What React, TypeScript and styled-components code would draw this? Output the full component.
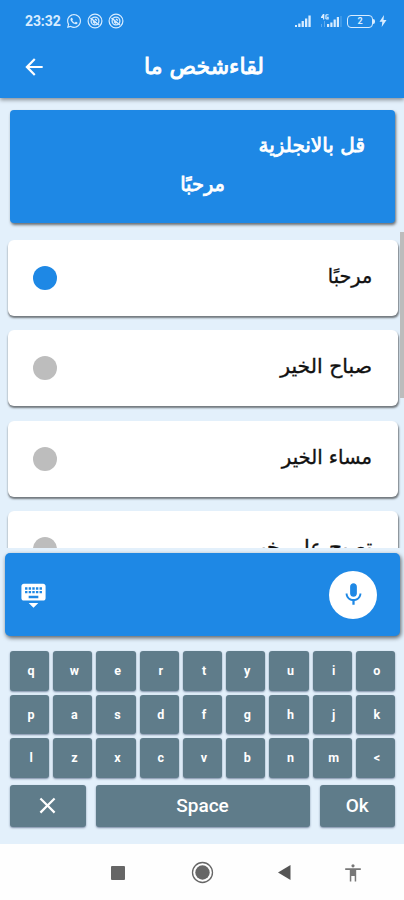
import React from 'react';
import styled, { createGlobalStyle } from 'styled-components';
import { MdArrowBack, MdKeyboardHide, MdMic, MdClose } from 'react-icons/md';
import { FaWhatsapp } from 'react-icons/fa';

const BLUE = '#1e88e5';
const SLATE = '#5f7c8a';

const GlobalStyle = createGlobalStyle`
  * { box-sizing: border-box; }
  body { margin: 0; background: #e3f2fd; }
`;

const Screen = styled.main`
  display: flex;
  flex-direction: column;
  width: 404px;
  height: 900px;
  overflow: hidden;
  background: #e3f0fb;
  font-family: Roboto, 'DejaVu Sans', sans-serif;
`;

const Header = styled.header`
  flex: none;
  height: 98px;
  background: ${BLUE};
  color: #fff;
  box-shadow: 0 2px 4px rgba(0, 0, 0, 0.4);
`;

const StatusBar = styled.div`
  display: flex;
  align-items: center;
  height: 42px;
  padding: 0 17px 0 25px;
  color: #d8ecff;
`;

const Clock = styled.span`
  width: 35px;
  margin-right: 6px;
  font-size: 14px;
  font-weight: 700;
  letter-spacing: -0.1px;
`;

const StatusIcons = styled.div`
  display: flex;
  align-items: center;
  gap: 5px;
`;

const StatusRight = styled.div`
  display: flex;
  align-items: center;
  margin-left: auto;
`;

const TitleBar = styled.div`
  display: grid;
  grid-template-columns: 46px 1fr;
  align-items: center;
  height: 49px;
  padding: 0 0 0 21px;
  svg { display: block; }
`;

const Arabic = styled.span<{ $size: number; $stroke?: number; $scale?: number }>`
  display: block;
  direction: rtl;
  white-space: nowrap;
  font-family: 'DejaVu Sans', sans-serif;
  font-size: ${p => p.$size}px;
  font-weight: 400;
  line-height: 28px;
  -webkit-text-stroke: ${p => p.$stroke ?? 0}px currentColor;
  transform: scaleX(${p => p.$scale ?? 1});
  transform-origin: right center;
`;

const Title = styled.h1`
  margin: 0;
  padding-right: 140px;
`;

const Prompt = styled.section`
  flex: none;
  height: 113px;
  margin: 12px 9px 0 10px;
  padding: 21px 30px 0 0;
  border-radius: 4px;
  background: ${BLUE};
  color: #fff;
  box-shadow: 1px 2px 3px rgba(0, 0, 0, 0.55);
`;

const PromptWord = styled.div`
  padding: 11px 140px 0 0;
`;

const ListArea = styled.div`
  flex: none;
  display: flex;
  height: 316px;
  margin-top: 9px;
  overflow: hidden;
`;

const List = styled.ul`
  flex: 1;
  display: flex;
  flex-direction: column;
  gap: 14.5px;
  margin: 0;
  padding: 7.5px 2px 0 7.5px;
  list-style: none;
`;

const Item = styled.li`
  flex: none;
  display: flex;
  align-items: center;
  justify-content: space-between;
  height: 76px;
  padding: 0 26px 0 25.5px;
  border-radius: 6px;
  background: #fff;
  color: #111;
  box-shadow: 0.5px 2px 2px rgba(0, 0, 0, 0.5);
`;

const Phrase = styled.div`
  padding-bottom: 4px;
`;

const Dot = styled.span<{ $on?: boolean }>`
  width: 24px;
  height: 24px;
  border-radius: 50%;
  background: ${p => (p.$on ? BLUE : '#bdbdbd')};
`;

const ScrollThumb = styled.div`
  width: 4px;
  height: 166px;
  background: #bcbcbc;
`;

const VoicePanel = styled.section`
  flex: none;
  display: flex;
  align-items: center;
  justify-content: space-between;
  height: 83px;
  margin: 5px 4px 0 5px;
  padding: 0 23px 0 14px;
  border-radius: 5px;
  background: ${BLUE};
  color: #fff;
  box-shadow: 1px 2px 4px rgba(0, 0, 0, 0.6);
`;

const MicButton = styled.button`
  display: grid;
  place-items: center;
  width: 48px;
  height: 48px;
  padding: 0;
  border: 0;
  border-radius: 50%;
  background: #fff;
  color: ${BLUE};
`;

const Keyboard = styled.section`
  flex: none;
  height: 208px;
  padding: 15px 9px 0 10px;
`;

const KeyGrid = styled.div`
  display: grid;
  grid-template-columns: repeat(9, 1fr);
  grid-auto-rows: 39.5px;
  gap: 4px;
`;

const Key = styled.button`
  display: grid;
  place-items: center;
  padding: 0 0 0 3px;
  border: 0;
  border-radius: 3px;
  background: ${SLATE};
  color: #fff;
  font: 700 12.5px Roboto, sans-serif;
  box-shadow: 0 1px 2px rgba(20, 40, 80, 0.5);
`;

const WideRow = styled.div`
  display: grid;
  grid-template-columns: 75.5px 1fr 75.5px;
  gap: 10px;
  height: 42.5px;
  margin-top: 7px;
`;

const WideKey = styled(Key)`
  padding: 0;
  font-size: 19px;
  font-weight: 500;
`;

const NavBar = styled.nav`
  flex: 1;
  display: flex;
  align-items: center;
  padding: 1px 0 0 110px;
  background: #fefefe;
  color: #666;
  svg { display: block; }
`;

const NavSlot = styled.span<{ $gap: number }>`
  margin-left: ${p => p.$gap}px;
`;

const Gap = styled.span<{ $w: number }>`
  width: ${p => p.$w}px;
`;

const BlockedIcon = () => (
  <svg width="16" height="16" viewBox="0 0 16 16" fill="none" stroke="currentColor">
    <circle cx="8" cy="8" r="6.9" strokeWidth="1.2" />
    <circle cx="8" cy="8" r="3.9" strokeWidth="1.3" />
    <path d="M3.5 5 12 12M6 8.5l2 2M8 6l2 1.5" strokeWidth="1.5" />
  </svg>
);

const SignalIcon = () => (
  <svg width="18" height="14" viewBox="0 0 18 14" fill="currentColor">
    <path d="M1 11h2v2H1zM4.2 9.5h2.3V13H4.2zM7.6 7h2.3v6H7.6zM11 4.5h2.3V13H11zM14.4 1.5h2.3V13h-2.3z" />
  </svg>
);

const DataSignalIcon = () => (
  <svg width="22" height="14" viewBox="0 0 22 14" fill="currentColor">
    <path d="M3 0 1 3v1h2v1.5h1.3V0zM8.5.2H6.2L5.3 1v3.8l1 .7h2.4V2.7H7V3.7h.4v.7h-.8V1.3h2z" />
    <path d="M1 10h1v3H1zM4 7h1v6H4z" opacity=".35" />
    <path d="M7 10h2.2v3H7zM10.3 8.5h2.2V13h-2.2zM13.6 5.5h2.2V13h-2.2zM16.8 3H19v10h-2.2z" />
    <path d="M20.5 2h1v11h-1z" opacity=".35" />
  </svg>
);

const Battery = styled.span`
  display: grid;
  place-items: center;
  width: 26px;
  height: 13px;
  margin-left: 5px;
  border: 1.5px solid currentColor;
  border-radius: 4px;
  font: 700 9px/9px Roboto, sans-serif;
`;

const BatteryTip = styled.span`
  width: 2px;
  height: 5px;
  background: currentColor;
  border-radius: 0 2px 2px 0;
`;

const BoltIcon = () => (
  <svg width="8" height="12" viewBox="0 0 8 12" fill="currentColor">
    <path d="M5 0 .5 6.7h2.8L2.7 12 7.5 5H4.5z" />
  </svg>
);

const phrases = [
  { text: 'مرحبًا', on: true, scale: 0.96 },
  { text: 'صباح الخير', scale: 1.02 },
  { text: 'مساء الخير', scale: 0.98 },
  { text: 'تصبح على خير', scale: 1.03 },
];

const keys = [...'qwertyuiopasdfghjklzxcvbnm<'];

export default function App() {
  return (
    <Screen>
      <GlobalStyle />
      <Header>
        <StatusBar>
          <Clock>23:32</Clock>
          <StatusIcons>
            <FaWhatsapp size={16} />
            <BlockedIcon />
            <BlockedIcon />
          </StatusIcons>
          <StatusRight>
            <SignalIcon />
            <Gap $w={8} />
            <DataSignalIcon />
            <Battery>2</Battery>
            <BatteryTip />
            <Gap $w={4} />
            <BoltIcon />
          </StatusRight>
        </StatusBar>
        <TitleBar>
          <MdArrowBack size={26} />
          <Title><Arabic $size={22} $stroke={0.9}>لقاءشخص ما</Arabic></Title>
        </TitleBar>
      </Header>
      <Prompt>
        <Arabic $size={20} $stroke={0.8}>قل بالانجلزية</Arabic>
        <PromptWord><Arabic $size={20} $stroke={0.8} $scale={0.97}>مرحبًا</Arabic></PromptWord>
      </Prompt>
      <ListArea>
        <List>
          {phrases.map(p => (
            <Item key={p.text}>
              <Dot $on={p.on} />
              <Phrase><Arabic $size={20} $stroke={0.35} $scale={p.scale}>{p.text}</Arabic></Phrase>
            </Item>
          ))}
        </List>
        <ScrollThumb />
      </ListArea>
      <VoicePanel>
        <MdKeyboardHide size={29} />
        <MicButton><MdMic size={27} /></MicButton>
      </VoicePanel>
      <Keyboard>
        <KeyGrid>{keys.map(k => <Key key={k}>{k}</Key>)}</KeyGrid>
        <WideRow>
          <WideKey><MdClose size={27} /></WideKey>
          <WideKey>Space</WideKey>
          <WideKey>Ok</WideKey>
        </WideRow>
      </Keyboard>
      <NavBar>
        <svg width="16" height="16"><rect x="1" y="1" width="14" height="14" rx="1" fill="#666" /></svg>
        <NavSlot $gap={65}>
          <svg width="23" height="23" viewBox="0 0 23 23">
            <circle cx="11.5" cy="11.5" r="10" fill="none" stroke="#666" strokeWidth="1.3" />
            <circle cx="11.5" cy="11.5" r="7.2" fill="#666" />
          </svg>
        </NavSlot>
        <NavSlot $gap={63}>
          <svg width="15" height="17" viewBox="0 0 15 17"><path d="M1 8.5 13.5 1v15z" fill="#555" /></svg>
        </NavSlot>
        <NavSlot $gap={52}>
          <svg width="18" height="18" viewBox="0 0 18 18" fill="#777">
            <circle cx="9" cy="1.8" r="1.6" />
            <path d="M1.2 4.3h15.6V6h-4.6v11.5h-1.5V12H7.3v5.5H5.8V6H1.2z" />
          </svg>
        </NavSlot>
      </NavBar>
    </Screen>
  );
}
